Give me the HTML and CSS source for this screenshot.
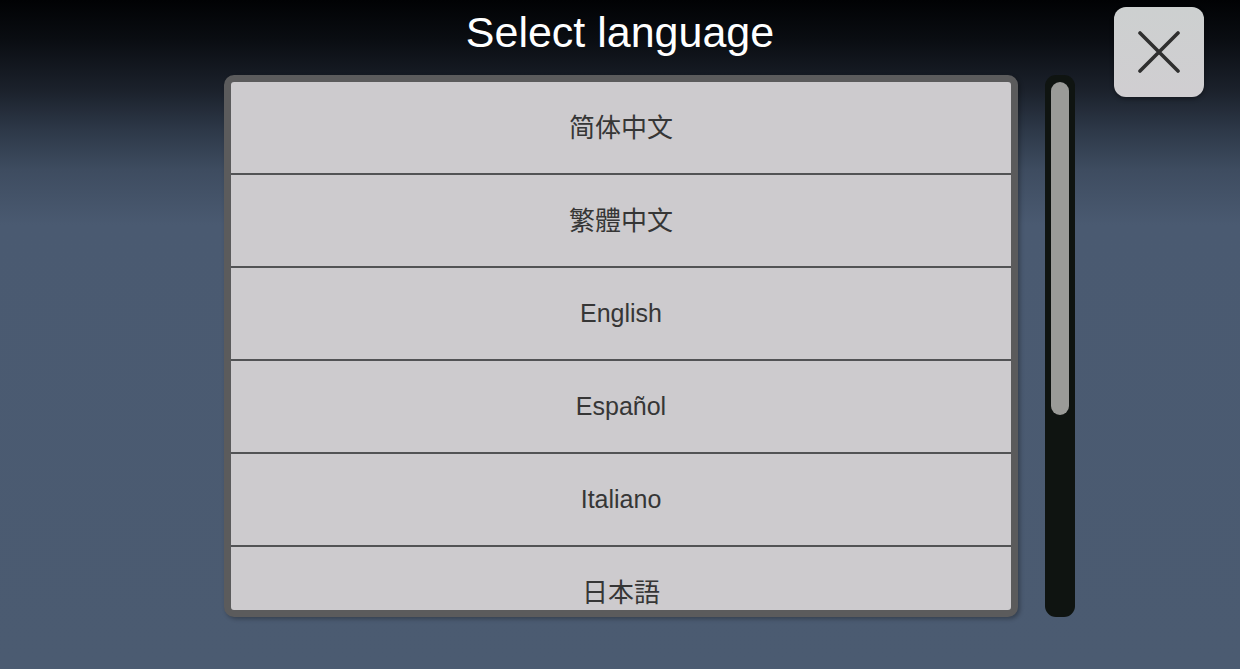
FILE: index.html
```html
<!DOCTYPE html>
<html lang="en">
<head>
<meta charset="utf-8">
<title>Select language</title>
<link rel="stylesheet" href="styles.css">
</head>
<body>
<div class="screen">
  <h1 class="title">Select language</h1>
  <button class="close" aria-label="Close">
    <svg width="42" height="42" viewBox="0 0 42 42" aria-hidden="true">
      <path d="M2 2 L40 40 M40 2 L2 40" stroke="#2f2f2f" stroke-width="3.6" stroke-linecap="round" fill="none"/>
    </svg>
  </button>
  <div class="main">
    <div class="panel">
      <ul class="list">
        <li class="row cjk" lang="zh-Hans">简体中文</li>
        <li class="row cjk" lang="zh-Hant">繁體中文</li>
        <li class="row">English</li>
        <li class="row">Español</li>
        <li class="row">Italiano</li>
        <li class="row cjk" lang="ja">日本語</li>
      </ul>
    </div>
    <div class="scrollbar">
      <div class="thumb"></div>
    </div>
  </div>
</div>
</body>
</html>
```

FILE: styles.css
```css
html, body {
  margin: 0;
  padding: 0;
}

body {
  width: 1240px;
  height: 669px;
  overflow: hidden;
  font-family: "Liberation Sans", Arial, "Noto Sans CJK SC", sans-serif;
  background: linear-gradient(to bottom,
    #010204 0px,
    #0a0d12 40px,
    #1b212b 90px,
    #2d3848 130px,
    #3e4c60 170px,
    #4a5a71 225px,
    #4b5b71 100%);
}

.screen {
  position: relative;
  width: 1240px;
  height: 669px;
}

.title {
  margin: 0;
  padding-top: 11px;
  height: 64px;
  font-size: 43px;
  line-height: 43px;
  font-weight: normal;
  color: #ffffff;
  text-align: center;
  box-sizing: border-box;
}

.close {
  position: absolute;
  top: 7px;
  left: 1114px;
  width: 90px;
  height: 90px;
  padding: 0;
  border: none;
  border-radius: 12px;
  background: linear-gradient(to bottom, #cdd0d0, #d0ced1);
  box-shadow: 0 2px 4px rgba(0, 0, 0, 0.35);
  display: flex;
  align-items: center;
  justify-content: center;
}

.main {
  display: flex;
  align-items: flex-start;
  gap: 27px;
  padding-left: 224px;
  margin-top: 11px;
}

.panel {
  width: 794px;
  height: 542px;
  box-sizing: border-box;
  border: 7px solid #5b5b5c;
  border-radius: 10px;
  background: #cdcbce;
  overflow: hidden;
  box-shadow: 2px 2px 4px rgba(0, 0, 0, 0.3);
}

.list {
  list-style: none;
  margin: 0;
  padding: 0;
}

.row {
  height: 93px;
  box-sizing: border-box;
  border-bottom: 2px solid #525355;
  display: flex;
  align-items: center;
  justify-content: center;
  font-size: 25px;
  color: #363636;
}

.row.cjk {
  font-size: 26px;
  padding-bottom: 5px;
}

.row:lang(zh-Hans) {
  font-family: "Noto Sans CJK SC", sans-serif;
}

.row:lang(zh-Hant) {
  font-family: "Noto Sans CJK TC", sans-serif;
}

.row:lang(ja) {
  font-family: "Noto Sans CJK JP", sans-serif;
}

.scrollbar {
  width: 30px;
  height: 542px;
  box-sizing: border-box;
  padding: 7px 6px;
  border-radius: 11px;
  background: #0f1411;
}

.thumb {
  width: 18px;
  height: 333px;
  border-radius: 9px;
  background: #9a9b98;
}
```
